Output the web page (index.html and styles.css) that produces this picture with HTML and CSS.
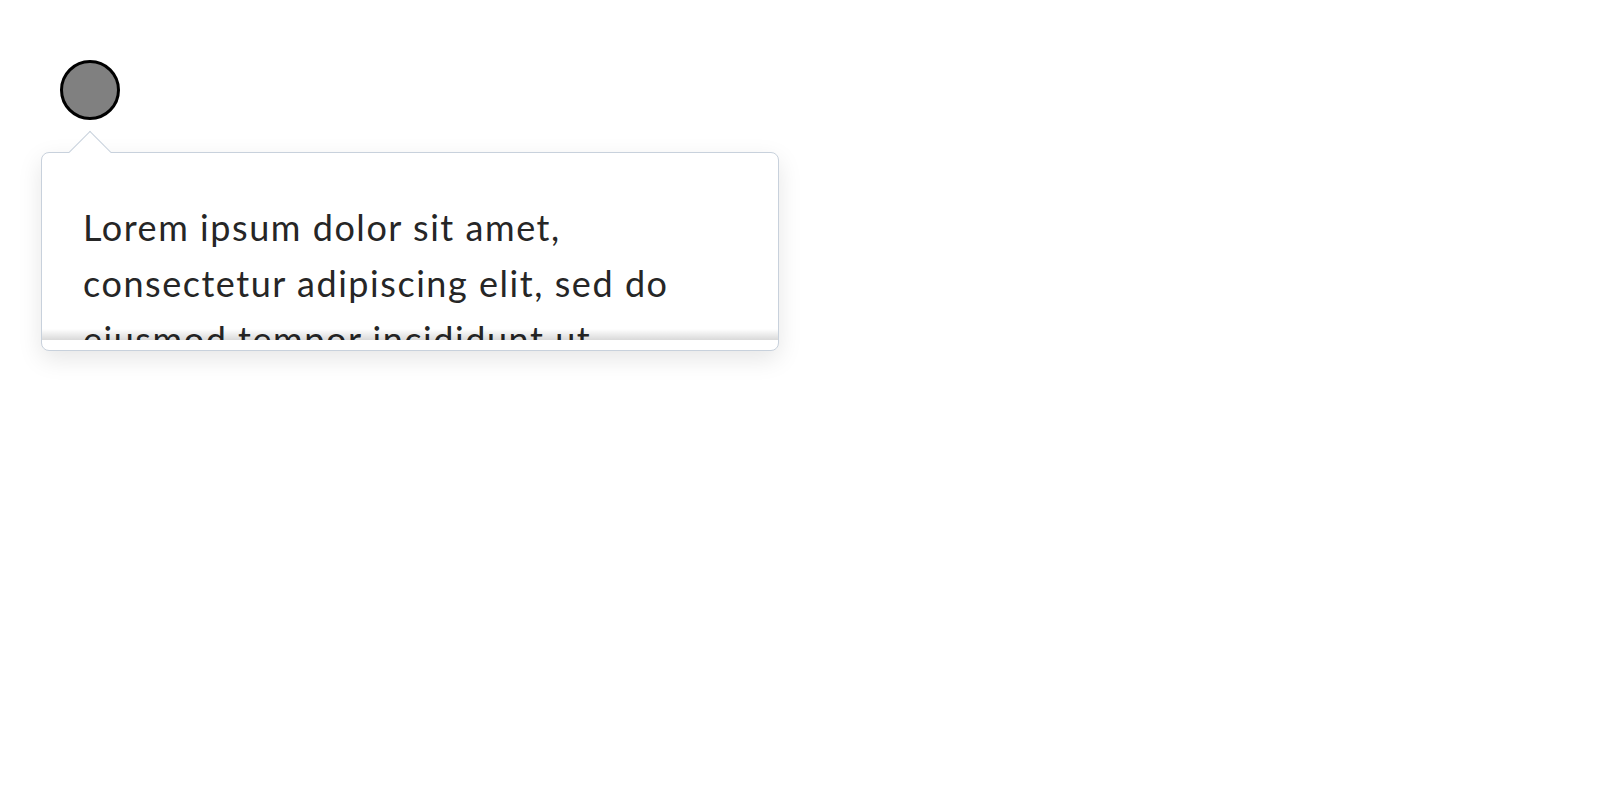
FILE: index.html
```html
<!DOCTYPE html>
<html lang="en">
<head>
<meta charset="utf-8">
<title>Popover</title>
<link rel="stylesheet" href="styles.css">
</head>
<body>
<div class="stage">
  <div class="anchor"></div>
  <div class="popover">
    <div class="arrow"></div>
    <div class="scroll">
      <p class="text">Lorem ipsum dolor sit amet, consectetur adipiscing elit, sed do eiusmod tempor incididunt ut labore et dolore magna aliqua. Ut enim ad minim veniam, quis nostrud exercitation ullamco laboris nisi ut aliquip ex ea commodo consequat.</p>
    </div>
    <div class="fade"></div>
  </div>
</div>
</body>
</html>
```
FILE: styles.css
```css
html, body {
  margin: 0;
  padding: 0;
  background: #ffffff;
  min-height: 100%;
  height: 100%;
}
body {
  font-family: Lato, "Liberation Sans", sans-serif;
}
.stage {
  display: flex;
  flex-direction: column;
  align-items: flex-start;
  padding: 60px;
  min-height: 800px;
  box-sizing: border-box;
}
.anchor {
  width: 60px;
  height: 60px;
  box-sizing: border-box;
  border: 3px solid #000000;
  border-radius: 50%;
  background: #808080;
  flex: none;
}
.popover {
  position: relative;
  margin-top: 32px;
  margin-left: -19px;
  width: 738px;
  box-sizing: border-box;
  background: #ffffff;
  border: 1px solid #c8d1dc;
  border-radius: 8px;
  box-shadow: 0 8px 24px rgba(0, 0, 0, 0.1);
  padding-bottom: 10px;
  flex: none;
}
.arrow {
  position: absolute;
  left: 33px;
  top: -16px;
  width: 30px;
  height: 30px;
  box-sizing: border-box;
  background: #ffffff;
  border-left: 1px solid #c8d1dc;
  border-top: 1px solid #c8d1dc;
  transform: rotate(45deg);
}
.scroll {
  position: relative;
  height: 187px;
  overflow: hidden;
  padding: 0 90px 0 41px;
  border-radius: 8px 8px 0 0;
}
.text {
  margin: 46px 0 0 0;
  font-size: 36px;
  line-height: 56px;
  letter-spacing: 1.55px;
  color: #262626;
}
.fade {
  position: absolute;
  left: 0;
  right: 0;
  bottom: 10px;
  height: 11px;
  background: linear-gradient(to bottom, rgba(0, 0, 0, 0), rgba(0, 0, 0, 0.15));
}
```
